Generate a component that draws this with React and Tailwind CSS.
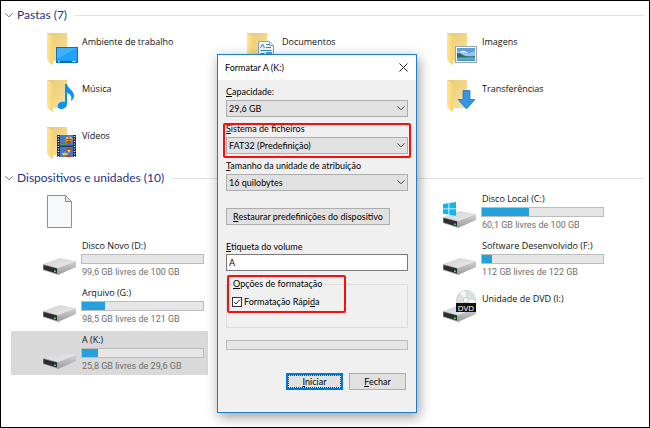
import React, { useState } from 'react';

const folders = [
  { name: 'Ambiente de trabalho', icon: 'desktop' },
  { name: 'Documentos', icon: 'docs' },
  { name: 'Imagens', icon: 'images' },
  { name: 'Música', icon: 'music' },
  null,
  { name: 'Transferências', icon: 'downloads' },
  { name: 'Vídeos', icon: 'videos' },
];

const devices = [
  { name: '', icon: 'file' },
  null,
  { name: 'Disco Local (C:)', icon: 'windows', used: 39, info: '60,1 GB livres de 100 GB' },
  { name: 'Disco Novo (D:)', icon: 'drive', used: 0, info: '99,6 GB livres de 100 GB' },
  null,
  { name: 'Software Desenvolvido (F:)', icon: 'drive', used: 8, info: '112 GB livres de 122 GB' },
  { name: 'Arquivo (G:)', icon: 'drive', used: 19, info: '98,5 GB livres de 121 GB' },
  null,
  { name: 'Unidade de DVD (I:)', icon: 'dvd' },
  { name: 'A (K:)', icon: 'drive', used: 13, info: '25,8 GB livres de 29,6 GB', selected: true },
];

// drawn over the lower right of the folder
const overlays = {
  desktop: (
    <>
      <rect x="9.5" y="14.5" width="21" height="15" fill="#1ea0fb" stroke="#1272b8" />
      <path d="M10 15h20L10 26z" fill="#3db0ff" />
      <path d="M10 28.5h20" stroke="#0b5d9c" />
      <path d="M11 28.5h2M25 28.5h4" stroke="#bfe2ff" />
    </>
  ),
  docs: (
    <>
      <path d="M11.5 8.5h11l4 4v19h-15z" fill="#f5f8fa" stroke="#93a1ab" />
      <path d="M22.5 8.5v4h4" fill="#dce4ea" stroke="#93a1ab" />
      <path d="M13.5 15l2-4 2 4M19 11.5h3M19 14.5h5M13.5 17.5h11M13.5 20.5h4M13.5 24.5h11" stroke="#3488c8" fill="none" />
      <rect x="19" y="19" width="6" height="4" fill="#5ba0cf" />
    </>
  ),
  images: (
    <>
      <rect x="8.5" y="13.5" width="21" height="16" fill="#fff" stroke="#9aa3aa" />
      <rect x="10" y="15" width="18" height="13" fill="#8fc7ee" />
      <path d="M10 15h18v3l-7 2-11-2z" fill="#5b9fe0" />
      <path d="M12 19q5-3 9 1z" fill="#e9f5fc" />
      <path d="M10 20q4 0 6 2t12 1v2H10z" fill="#2c6b56" />
      <path d="M10 24.5l18-1V28H10z" fill="#3f8fc8" />
      <path d="M10 26h18" stroke="#7fc2e4" />
    </>
  ),
  music: (
    <path d="M18 4h2c1 5 7 6 7 12 0 3-2 4-3 5 1-4 0-7-4-8v10c0 4-3 6-6 6-5 0-4-6 0-7 2-.5 3 0 4 0z" fill="#0a93ee" />
  ),
  downloads: (
    <path d="M16 10.5h7v9h5l-8.5 9.5-8.5-9.500h5z" fill="#3494e6" stroke="#2377c2" strokeWidth=".8" />
  ),
  videos: (
    <>
      <rect x="10" y="8" width="19" height="22" fill="#25272d" />
      <rect x="13" y="8" width="13" height="22" fill="#3f79d4" />
      <path d="M11.5 9v21M27.5 9v21" stroke="#e6e8eb" strokeWidth="1.5" strokeDasharray="1 1.5" />
      <path d="M13 18.5h13v1.5h-13z" fill="#263a66" />
      <ellipse cx="22" cy="12.5" rx="3.5" ry="3" fill="#e8c32e" />
      <path d="M22 9.5v6M19 12.5h6" stroke="#c9382b" />
      <path d="M19 13q3 2 6 0-1 3-3 4-2-1-3-4z" fill="#c9382b" />
      <path d="M13 16l4-2 4 2-2 2h-5z" fill="#4aa352" />
      <path d="M14 15.5h4v1.5h-4z" fill="#e03b3b" />
      <ellipse cx="22" cy="23" rx="3" ry="2" fill="#c93f38" />
      <path d="M20 23h4l-2 3z" fill="#edca36" />
      <ellipse cx="18" cy="27" rx="3" ry="1.5" fill="#ebc238" />
      <path d="M19 28h5v2h-6z" fill="#cf3c2c" />
    </>
  ),
};

const FolderIcon = ({ kind }) => (
  <svg width="38" height="34" viewBox="0 0 38 34" className="shrink-0 overflow-visible" aria-hidden="true">
    <defs>
      <linearGradient id="folderFront" x1="0" y1="0" x2="1" y2="0">
        <stop offset="0" stopColor="#ffe596" />
        <stop offset="1" stopColor="#f8d470" />
      </linearGradient>
      <linearGradient id="folderBack" x1="0" y1="0" x2="1" y2="1">
        <stop offset="0" stopColor="#e9c874" />
        <stop offset="1" stopColor="#fae29c" />
      </linearGradient>
    </defs>
    <path d="M4 1h20v28H10L4 27z" fill="url(#folderBack)" />
    <path d="M4 1l6 4v27l-1 1-5-5z" fill="url(#folderFront)" />
    <g transform="translate(4 1)">{overlays[kind]}</g>
  </svg>
);

const DriveIcon = ({ kind }) => (
  <svg width="38" height="34" viewBox="0 0 38 34" className="shrink-0 overflow-visible" aria-hidden="true">
    <defs>
      <linearGradient id="driveTop" x1="0" y1="0" x2="1" y2="1">
        <stop offset="0" stopColor="#d0d1d3" />
        <stop offset="1" stopColor="#ececee" />
      </linearGradient>
      <linearGradient id="driveSide" x1="0" y1="0" x2="0" y2="1">
        <stop offset="0" stopColor="#d3d4d7" />
        <stop offset="1" stopColor="#97999d" />
      </linearGradient>
    </defs>
    <path d="M0 22l17-6 16 3-18 7z" fill="url(#driveTop)" />
    <path d="M15 26l18-7v6l-18 8z" fill="url(#driveSide)" />
    <path d="M0 22l15 4v7L0 28z" fill="#9fa1a4" />
    <path d="M.5 23L14 26.5v5L.5 27.5z" fill="#2b2d30" />
    <path d="M11 28.3l2 .5v1.5l-2-.5z" fill="#35e04a" />
    {kind === 'windows' && (
      <path d="M0 9l5.5-.8v5.300H0zM6.300 8L13 7v6.500H6.300zM0 14.300h5.500v5.300L0 18.800zM6.300 14.300H13v6.500l-6.700-1z" fill="#12b6ef" />
    )}
    {kind === 'dvd' && (
      <>
        <circle cx="23" cy="11" r="9.5" fill="#dedfe0" stroke="#b9bbbd" strokeWidth=".7" />
        <path d="M23 11L17 4a9 9 0 0 1 5-2zM23 11l7 5a9 9 0 0 0 2-5z" fill="#f8f8f8" />
        <path d="M23 11l3-9a9 9 0 0 1 5 4z" fill="#d3e8d8" />
        <circle cx="23" cy="11" r="2.5" fill="#fff" stroke="#b5b7b9" strokeWidth=".7" />
        <rect x="13" y="14" width="20" height="9" fill="#111" />
        <text x="23" y="21.5" textAnchor="middle" fontSize="8" fill="#fff">DVD</text>
      </>
    )}
  </svg>
);

const FileIcon = () => (
  <svg width="38" height="34" viewBox="0 0 38 34" className="shrink-0" aria-hidden="true">
    <path d="M4.5.5h18l6 6v26h-24z" fill="#f7f8f9" stroke="#8d8f91" />
    <path d="M22.5.5v6h6z" fill="#e3e5e7" stroke="#8d8f91" />
  </svg>
);

const Chevron = ({ className }) => (
  <svg width="8" height="8" viewBox="0 0 8 8" className={className} aria-hidden="true">
    <path d="M.5 2.3L4 5.8l3.5-3.5" fill="none" stroke="currentColor" />
  </svg>
);

const SectionTitle = ({ children }) => (
  <div className="flex h-6 items-center gap-1 pl-1 pr-[5px]">
    <Chevron className="shrink-0 text-[#6b6b6b]" />
    <h2 className="whitespace-nowrap font-['Lato','Open_Sans',sans-serif] text-[12px] leading-4 text-[#1e3287]">{children}</h2>
    <div className="ml-1 h-px flex-1 bg-[#e2e2e2]" />
  </div>
);

const Tile = ({ item }) => {
  if (!item) return <div className="h-11" />;
  const hasBar = item.used !== undefined;
  return (
    <div className={item.selected ? 'flex h-11 items-center bg-[#d9d9d9] pl-8 pr-1' : 'flex h-11 items-center pl-8 pr-1'}>
      {item.icon === 'file' ? <FileIcon /> : ['drive', 'windows', 'dvd'].includes(item.icon) ? <DriveIcon kind={item.icon} /> : <FolderIcon kind={item.icon} />}
      <div className={hasBar ? 'min-w-0 flex-1 self-start pt-[3px]' : 'min-w-0 flex-1 self-start pt-[9px]'}>
        <p className="whitespace-nowrap pl-px text-[9px] leading-3 text-[#111]">{item.name}</p>
        {hasBar && (
          <>
            <div className="mt-0.5 h-2.5 border border-[#bcbcbc] bg-[#e6e6e6]">
              <div className="h-full bg-[#26a0da]" style={{ width: `${item.used}%` }} />
            </div>
            <p className="mt-0.5 whitespace-nowrap pl-px font-['Roboto','Open_Sans',sans-serif] text-[9px] leading-3 text-[#6d6d6d]">{item.info}</p>
          </>
        )}
      </div>
    </div>
  );
};

const TileGrid = ({ items }) => (
  <div className="grid grid-cols-3 gap-[3px] pl-2.5 pr-[41px]">
    {items.map((item, i) => <Tile key={i} item={item} />)}
  </div>
);

const SelectField = ({ id, label, value }) => (
  <div>
    <label htmlFor={id} className="block leading-3">{label}</label>
    <div className="relative mt-0.5">
      <select id={id} defaultValue={value} className="block h-[17px] w-full appearance-none border border-[#adadad] bg-[#e1e1e1] pl-0.5 leading-3">
        <option>{value}</option>
      </select>
      <Chevron className="pointer-events-none absolute right-[3px] top-1 text-[#444]" />
    </div>
  </div>
);

const FormatDialog = () => {
  const [volume, setVolume] = useState('A');
  const [quick, setQuick] = useState(true);

  return (
    <div role="dialog" aria-label="Formatar A (K:)" className="absolute left-[216px] top-[53px] w-[200px] border border-[#1f7cc7] bg-[#f0f0f0] font-['Lato','Open_Sans',sans-serif] text-[9px] text-black shadow-[2px_4px_12px_rgba(0,0,0,0.4)]">
      <div className="flex h-[25px] items-center justify-between bg-white pl-[7px] pr-2">
        <span>Formatar A (K:)</span>
        <button aria-label="Fechar janela">
          <svg width="9" height="9" viewBox="0 0 9 9"><path d="M.5.5l8 8M8.5.5l-8 8" stroke="#222" /></svg>
        </button>
      </div>

      <div className="px-2 pb-[22px] pt-1.5">
        <div className="space-y-1.5">
          <SelectField id="capacity" label={<><u>C</u>apacidade:</>} value="29,6 GB" />
          <div className="relative">
            <SelectField id="filesystem" label={<><u>S</u>istema de ficheiros</>} value="FAT32 (Predefinição)" />
            <div className="pointer-events-none absolute -inset-x-[3px] -bottom-1 top-0 rounded-xs border-2 border-[#fb0d0d]" />
          </div>
          <SelectField id="unit" label={<><u>T</u>amanho da unidade de atribuição</>} value="16 quilobytes" />
        </div>

        <button className="mt-[17px] block h-[17px] w-[164px] border border-[#adadad] bg-[#e1e1e1] leading-3">
          <u>R</u>estaurar predefinições do dispositivo
        </button>

        <label htmlFor="volume" className="mt-4 block leading-3"><u>E</u>tiqueta do volume</label>
        <input id="volume" value={volume} onChange={e => setVolume(e.target.value)} className="mt-px block h-[17px] w-full border border-[#7a7a7a] bg-white pl-0.5 leading-3" />

        <div className="relative mt-[7px]">
          <fieldset className="h-[50px] border border-[#dcdcdc] pl-[5px]">
            <legend className="px-px leading-3"><u>O</u>pções de formatação</legend>
            <label className="mt-1.5 flex h-3 items-center gap-0.5">
              <span className="relative h-2.5 w-2.5">
                <input type="checkbox" checked={quick} onChange={e => setQuick(e.target.checked)} className="block h-2.5 w-2.5 appearance-none border border-[#333] bg-white" />
                {quick && (
                  <svg width="10" height="10" viewBox="0 0 10 10" className="pointer-events-none absolute inset-0">
                    <path d="M2 5l2 2 4-4.500" fill="none" stroke="#222" />
                  </svg>
                )}
              </span>
              <span>Formatação Rápi<u>d</u>a</span>
            </label>
          </fieldset>
          <div className="pointer-events-none absolute -top-[3px] left-px h-[38px] w-[119px] rounded-xs border-2 border-[#fb0d0d]" />
        </div>

        <div role="progressbar" aria-label="Progresso" className="mt-3 h-2.5 border border-[#bcbcbc] bg-[#e6e6e6]" />

        <div className="mt-[23px] flex justify-end gap-1.5 pr-0.5">
          <button className="h-[17px] w-[57px] border-2 border-[#0078d7] bg-[#e1e1e1] leading-3">
            <span className="flex h-full items-center justify-center border border-dotted border-[#333]"><span><u>I</u>niciar</span></span>
          </button>
          <button className="h-[17px] w-[57px] border border-[#adadad] bg-[#e1e1e1] leading-3"><u>F</u>echar</button>
        </div>
      </div>
    </div>
  );
};

const App = () => (
  <div className="relative min-h-screen overflow-hidden border border-black bg-white pt-0.5 font-['Open_Sans','Noto_Sans',sans-serif]">
    <section>
      <SectionTitle>Pastas (7)</SectionTitle>
      <TileGrid items={folders} />
    </section>
    <section className="mt-px">
      <SectionTitle>Dispositivos e unidades (10)</SectionTitle>
      <TileGrid items={devices} />
    </section>
    <FormatDialog />
  </div>
);

export default App;
